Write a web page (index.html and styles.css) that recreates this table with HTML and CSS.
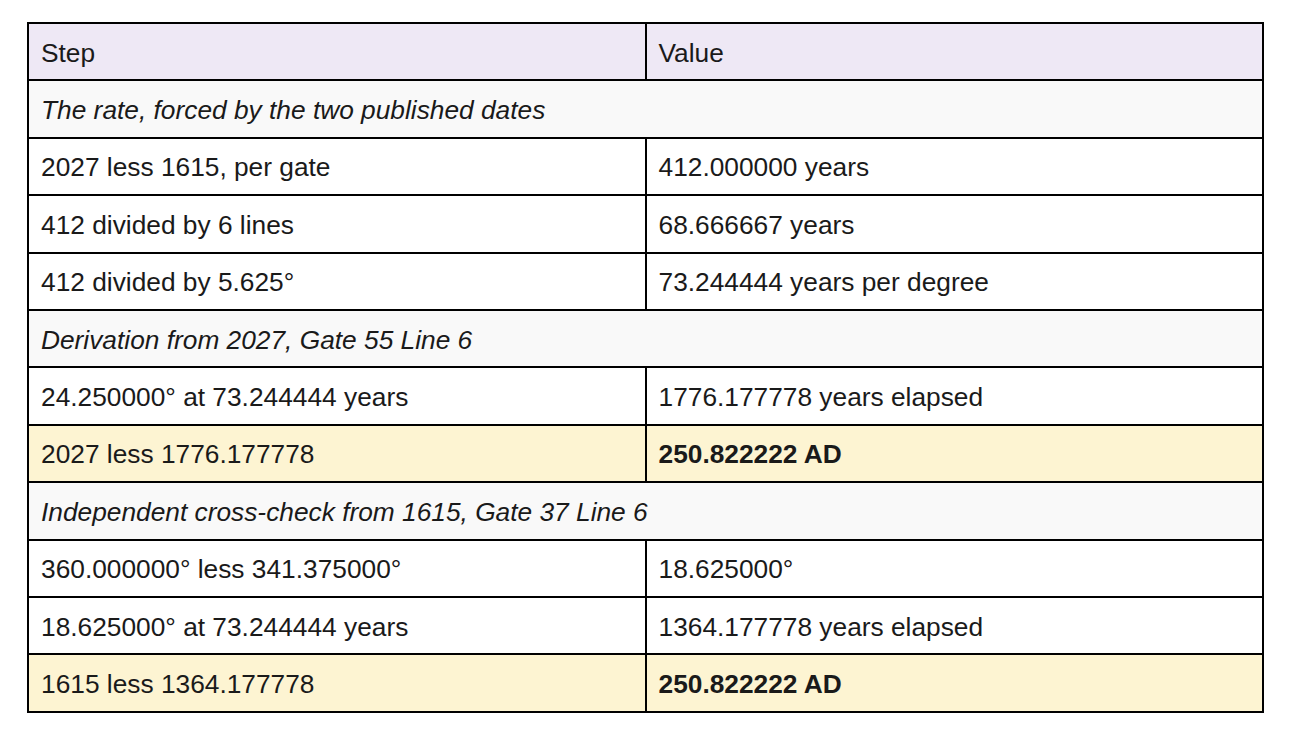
FILE: index.html
```html
<!DOCTYPE html>
<html>
<head>
<meta charset="utf-8">
<link rel="stylesheet" href="styles.css">
</head>
<body>
<div class="wrap">
<table class="calc">
  <thead>
    <tr class="head"><th>Step</th><th>Value</th></tr>
  </thead>
  <tbody>
    <tr class="section"><td colspan="2">The rate, forced by the two published dates</td></tr>
    <tr><td>2027 less 1615, per gate</td><td>412.000000 years</td></tr>
    <tr><td>412 divided by 6 lines</td><td>68.666667 years</td></tr>
    <tr><td>412 divided by 5.625°</td><td>73.244444 years per degree</td></tr>
    <tr class="section"><td colspan="2">Derivation from 2027, Gate 55 Line 6</td></tr>
    <tr><td>24.250000° at 73.244444 years</td><td>1776.177778 years elapsed</td></tr>
    <tr class="result"><td>2027 less 1776.177778</td><td class="strong">250.822222 AD</td></tr>
    <tr class="section"><td colspan="2">Independent cross-check from 1615, Gate 37 Line 6</td></tr>
    <tr><td>360.000000° less 341.375000°</td><td>18.625000°</td></tr>
    <tr><td>18.625000° at 73.244444 years</td><td>1364.177778 years elapsed</td></tr>
    <tr class="result"><td>1615 less 1364.177778</td><td class="strong">250.822222 AD</td></tr>
  </tbody>
</table>
</div>
</body>
</html>
```
FILE: styles.css
```css
html, body {
  margin: 0;
  padding: 0;
  background: #ffffff;
}
.wrap {
  padding: 22px 0 0 27px;
}
.calc {
  width: 1237px;
  border-collapse: collapse;
  table-layout: fixed;
  font-family: "Liberation Sans", Arial, sans-serif;
  font-size: 26.3px;
  color: #1a1a1a;
}
.calc th, .calc td {
  border: 2px solid #000;
  padding: 2px 12px 0;
  height: 53.4px;
  line-height: 30px;
  text-align: left;
  font-weight: normal;
  vertical-align: middle;
}
.head th {
  background: #eee8f5;
}
.section td {
  background: #f9f9f9;
  font-style: italic;
}
.result td {
  background: #fdf4d2;
}
.calc td.strong {
  font-weight: bold;
}
```
